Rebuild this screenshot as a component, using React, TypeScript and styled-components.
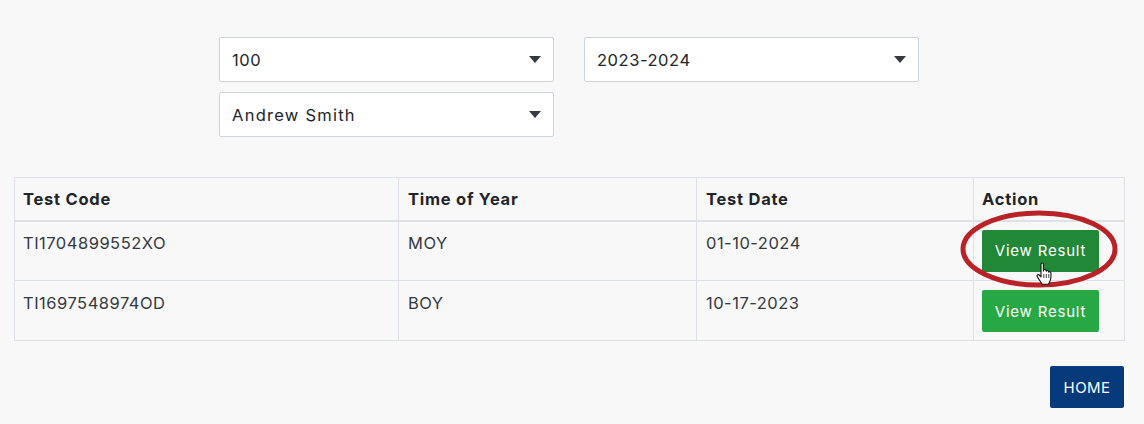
import React from "react";
import styled, { createGlobalStyle } from "styled-components";

const GlobalStyle = createGlobalStyle`
  html, body {
    margin: 0;
    padding: 0;
    background: #f8f8f8;
    font-family: Inter, "Open Sans", sans-serif;
    color: #212529;
  }
`;

const Page = styled.div`
  width: 1144px;
  height: 424px;
  box-sizing: border-box;
  padding: 37px 20px 0 14px;
  overflow: hidden;
`;

const Filters = styled.div`
  display: grid;
  grid-template-columns: 335px 335px;
  column-gap: 30px;
  row-gap: 10px;
  margin: 0 0 40px 205px;
`;

const Select = styled.div<{ $spacing?: number }>`
  height: 45px;
  box-sizing: border-box;
  display: flex;
  align-items: center;
  justify-content: space-between;
  padding: 0 12px;
  background: #fff;
  border: 1px solid #ced4da;
  border-radius: 2px;
  font-size: 16.5px;
  letter-spacing: ${(props) => props.$spacing ?? 0.55}px;
  color: #212529;
`;

const Caret = styled.span`
  width: 0;
  height: 0;
  border-left: 6.5px solid transparent;
  border-right: 6.5px solid transparent;
  border-top: 7px solid #343a40;
`;

const Table = styled.table`
  width: 1110px;
  table-layout: fixed;
  border-collapse: collapse;

  th:nth-child(2),
  th:nth-child(3),
  td:nth-child(2),
  td:nth-child(3) {
    padding-left: 9px;
  }

  tbody tr:last-child td {
    padding-top: 9px;
  }
`;

const Th = styled.th<{ $width: number }>`
  width: ${(props) => props.$width}px;
  height: 43px;
  box-sizing: border-box;
  padding: 0 8px;
  border: 1px solid #dee2e6;
  border-bottom-width: 2px;
  text-align: left;
  font-size: 16.5px;
  font-weight: 700;
  letter-spacing: 0.75px;
  color: #212529;
`;

const Td = styled.td`
  height: 60px;
  box-sizing: border-box;
  padding: 8px;
  vertical-align: top;
  border: 1px solid #dee2e6;
  font-size: 16.5px;
  letter-spacing: 0.5px;
  line-height: 26px;
  color: #343a40;
`;

const ActionCell = styled(Td)`
  position: relative;
`;

const ResultButton = styled.button<{ $active?: boolean }>`
  display: block;
  width: 117px;
  height: 42px;
  padding: 0;
  border: none;
  border-radius: 2px;
  background: ${(props) => (props.$active ? "#218838" : "#28a745")};
  color: #fff;
  font-family: inherit;
  font-size: 15px;
  letter-spacing: 0.8px;
`;

const Highlight = styled.svg`
  position: absolute;
  left: -14px;
  top: -14px;
  pointer-events: none;
`;

const Pointer = styled.svg`
  position: absolute;
  left: 62px;
  top: 40px;
  pointer-events: none;
`;

const Footer = styled.div`
  display: flex;
  justify-content: flex-end;
  margin-top: 25px;
`;

const HomeButton = styled.button`
  width: 74px;
  height: 42px;
  padding: 0;
  border: none;
  border-radius: 2px;
  background: #063a7a;
  color: #fff;
  font-family: inherit;
  font-size: 15px;
  letter-spacing: 0.4px;
`;

const rows = [
  { code: "TI1704899552XO", time: "MOY", date: "01-10-2024", active: true },
  { code: "TI1697548974OD", time: "BOY", date: "10-17-2023", active: false },
];

const App: React.FC = () => {
  return (
    <Page>
      <GlobalStyle />
      <Filters>
        <Select>
          100
          <Caret />
        </Select>
        <Select>
          2023-2024
          <Caret />
        </Select>
        <Select $spacing={1.25}>
          Andrew Smith
          <Caret />
        </Select>
      </Filters>
      <Table>
        <thead>
          <tr>
            <Th $width={384}>Test Code</Th>
            <Th $width={298}>Time of Year</Th>
            <Th $width={277}>Test Date</Th>
            <Th $width={151}>Action</Th>
          </tr>
        </thead>
        <tbody>
          {rows.map((row) => (
            <tr key={row.code}>
              <Td>{row.code}</Td>
              <Td>{row.time}</Td>
              <Td>{row.date}</Td>
              <ActionCell>
                <ResultButton $active={row.active}>View Result</ResultButton>
                {row.active && (
                  <>
                    <Highlight width="160" height="84" viewBox="0 0 160 84">
                      <ellipse
                        cx="79"
                        cy="41"
                        rx="76"
                        ry="36"
                        fill="none"
                        stroke="#b92327"
                        strokeWidth="5"
                      />
                    </Highlight>
                    <Pointer width="18" height="24" viewBox="0 0 18 24">
                      <path
                        d="M5 2.2c0-1.6 2.4-1.6 2.4 0v7l.3-1c.5-1 2.2-.8 2.4.4l.1.6c.4-1 2.1-.9 2.4.3l.1.7c.5-.8 2.1-.5 2.2.7.2 2.4.1 5-.5 7-.5 1.8-1.4 3.3-1.9 4.3H6.3C5 20.200 2.500 17 1.200 14.600c-.7-1.300.9-2.600 2-1.600L5 14.800z"
                        fill="#fff"
                        stroke="#111"
                        strokeWidth="1.100"
                        strokeLinejoin="round"
                      />
                      <path d="M7.800 12v4M10.300 12v4M12.800 12v4" stroke="#111" strokeWidth="0.800" />
                    </Pointer>
                  </>
                )}
              </ActionCell>
            </tr>
          ))}
        </tbody>
      </Table>
      <Footer>
        <HomeButton>HOME</HomeButton>
      </Footer>
    </Page>
  );
};

export default App;
